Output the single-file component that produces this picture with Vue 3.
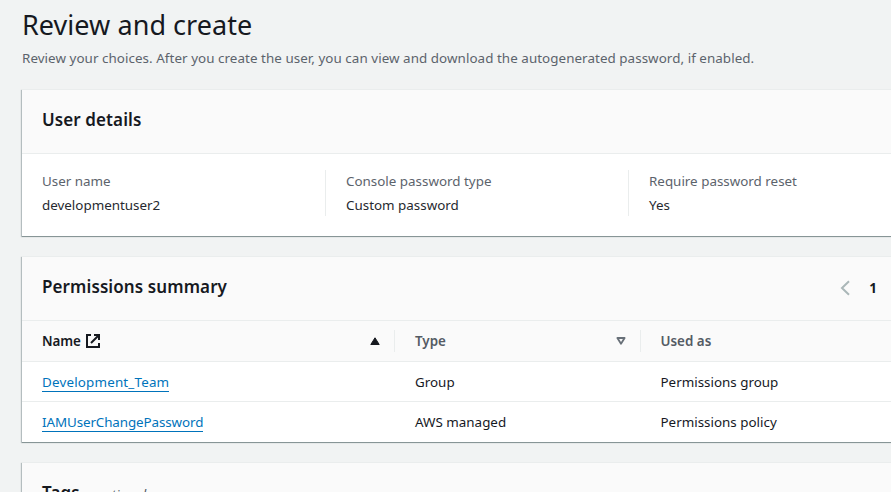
<script setup>
const details = [
  { label: 'User name', value: 'developmentuser2' },
  { label: 'Console password type', value: 'Custom password' },
  { label: 'Require password reset', value: 'Yes' },
]
const rows = [
  { name: 'Development_Team', type: 'Group', used: 'Permissions group' },
  { name: 'IAMUserChangePassword', type: 'AWS managed', used: 'Permissions policy' },
]
</script>

<template>
  <main class="page">
    <h1>Review and create</h1>
    <p class="intro">Review your choices. After you create the user, you can view and download the autogenerated password, if enabled.</p>

    <section class="card">
      <header class="card-head"><h2>User details</h2></header>
      <dl class="details">
        <div v-for="d in details" :key="d.label" class="detail">
          <dt>{{ d.label }}</dt>
          <dd>{{ d.value }}</dd>
        </div>
      </dl>
    </section>

    <section class="card">
      <header class="card-head">
        <h2>Permissions summary</h2>
        <nav class="pager">
          <svg width="16" height="16" viewBox="0 0 16 16"><path d="M12 1.3 5 8l7 6.7" fill="none" stroke="#aab7b8" stroke-width="2" /></svg>
          <b>1</b>
        </nav>
      </header>
      <div class="row thead">
        <div class="cell active">
          <span class="name">Name</span>
          <svg class="ext" width="14" height="14" viewBox="0 0 14 14" fill="none" stroke="#16191f" stroke-width="2">
            <path d="M5 1H1v12h12V9" /><path d="M8 1h5v5M13 1 5 9" />
          </svg>
          <svg class="sort" width="10" height="8" viewBox="0 0 10 8"><path d="M5 0.8 9.2 7.5H0.8Z" fill="#16191f" stroke="#16191f" stroke-linejoin="round" /></svg>
        </div>
        <div class="cell">
          <span>Type</span>
          <svg class="sort" width="10" height="8" viewBox="0 0 10 8"><path d="M1.4 1h7.2L5 6.8Z" fill="none" stroke="#687078" stroke-width="1.8" stroke-linejoin="round" /></svg>
        </div>
        <div class="cell"><span>Used as</span></div>
      </div>
      <div v-for="r in rows" :key="r.name" class="row">
        <div class="cell"><a>{{ r.name }}</a></div>
        <div class="cell">{{ r.type }}</div>
        <div class="cell">{{ r.used }}</div>
      </div>
    </section>

    <section class="card">
      <header class="card-head tags"><h2>Tags <i>- optional</i></h2></header>
    </section>
  </main>
</template>

<style>
html, body { margin: 0; overflow: hidden; background: #f1f3f3; }
</style>

<style scoped>
.page {
  box-sizing: border-box;
  width: 891px;
  height: 492px;
  overflow: hidden;
  padding: 7px 0 0 22px;
  background: #f1f3f3;
  color: #16191f;
  font: 13.4px/22px "Noto Sans", "Open Sans", sans-serif;
  white-space: nowrap;
}
h1, h2, p, dl, dt, dd { margin: 0; }
h1 { font-size: 27px; font-weight: 400; line-height: 36px; letter-spacing: 0.05px; }
.intro { margin-top: 4px; color: #5c636c; letter-spacing: 0.055px; }
.card {
  width: 900px;
  margin-top: 20px;
  background: #fff;
  border-top: 1px solid #eaeded;
  box-shadow: 0 1px 0 0 #879596, -1px 1px 1px 0 rgba(0, 28, 36, 0.25);
}
.card-head {
  display: flex;
  align-items: center;
  box-sizing: border-box;
  height: 64px;
  padding: 0 20px 4px;
  background: #fafafa;
  border-bottom: 1px solid #eaeded;
}
h2 { font-size: 17px; font-weight: 600; line-height: 22px; letter-spacing: 0.1px; }
.details { display: flex; padding: 16px 0 20px 20px; }
.detail { box-sizing: border-box; flex: none; width: 303px; height: 46px; }
.detail + .detail { padding-left: 20px; border-left: 1px solid #eaeded; }
.detail:first-child { width: 283px; }
dt { color: #5c636c; height: 24px; }
dd { color: #26292f; }
.pager { display: flex; align-items: center; gap: 16px; margin-left: auto; margin-right: 25px; padding-top: 2px; }
.row { display: flex; box-sizing: border-box; height: 40px; border-top: 1px solid #eaeded; align-items: center; }
.row:last-child { height: 41px; padding-bottom: 1px; }
.thead { height: 40px; background: #fafafa; border-top: 0; font-weight: 600; color: #545b64; }
.cell { display: flex; align-items: center; box-sizing: border-box; flex: none; width: 246px; padding-left: 20px; }
.cell:first-child { width: 373px; }
.cell:last-child { padding-left: 19.5px; }
.thead .cell { height: 22px; }
.thead .cell:first-child { width: 372px; }
.thead .cell + .cell { border-left: 1px solid #eaeded; }
.active { color: #16191f; }
.name { letter-spacing: -0.1px; padding-bottom: 1px; }
.ext { margin-left: 5px; }
.sort { margin-left: auto; margin-right: 14px; }
a { color: #0073bb; line-height: 17px; margin-top: 2px; border-bottom: 1px solid #0073bb; letter-spacing: 0.18px; }
.row:last-child a { letter-spacing: -0.1px; }
.tags { padding-bottom: 2px; }
i { font-size: 13.4px; font-weight: 400; color: #545b64; margin-left: 4px; }
</style>
